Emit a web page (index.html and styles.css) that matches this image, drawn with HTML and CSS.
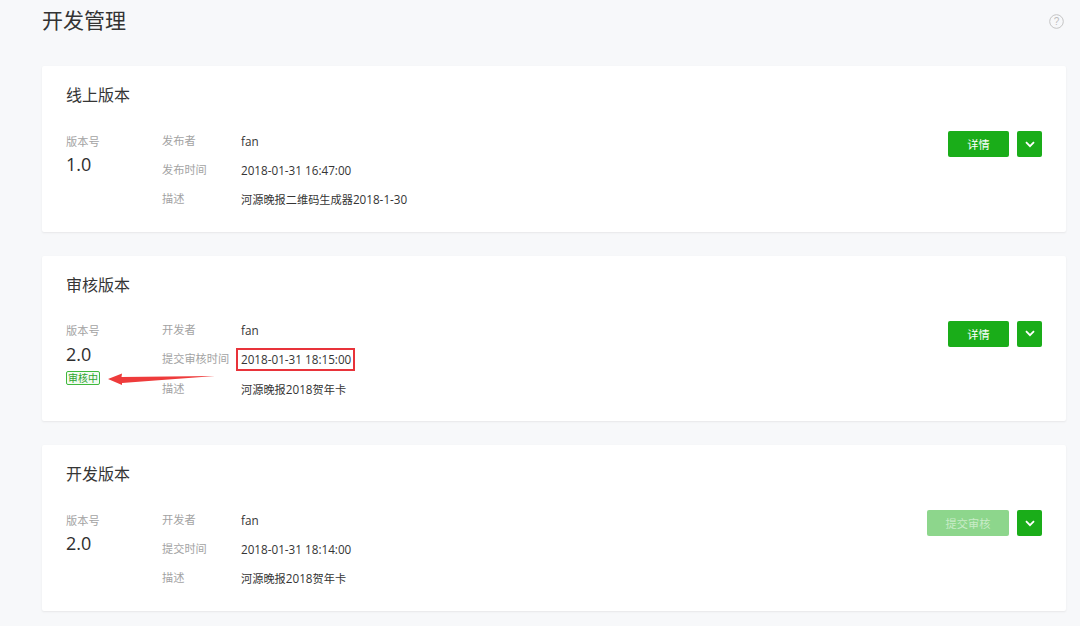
FILE: index.html
```html
<!DOCTYPE html>
<html lang="zh">
<head>
<meta charset="utf-8">
<title>开发管理</title>
<link rel="stylesheet" href="styles.css">
</head>
<body>
<main class="page">
  <header class="page-head">
    <h1 class="page-title">开发管理</h1>
    <svg class="help" width="15" height="15" viewBox="0 0 15 15"><circle cx="7.5" cy="7.5" r="6.8" fill="none" stroke="#c4c4c4" stroke-width="1"/><text x="7.5" y="11" text-anchor="middle" class="help-mark">?</text></svg>
  </header>

  <section class="card">
    <h2 class="card-title">线上版本</h2>
    <div class="card-body">
      <div class="version"><div class="version-label">版本号</div><div class="version-num">1.0</div></div>
      <dl class="meta">
        <div class="row"><dt>发布者</dt><dd>fan</dd></div>
        <div class="row"><dt>发布时间</dt><dd>2018-01-31 16:47:00</dd></div>
        <div class="row"><dt>描述</dt><dd><span class="zh">河源晚报二维码生成器</span>2018-1-30</dd></div>
      </dl>
      <div class="actions">
        <button class="btn">详情</button>
        <button class="btn-more"><svg width="10" height="7" viewBox="0 0 10 7"><path d="M1 1.2 5 5.2 9 1.2" fill="none" stroke="#fff" stroke-width="1.8"/></svg></button>
      </div>
    </div>
  </section>

  <section class="card">
    <h2 class="card-title">审核版本</h2>
    <div class="card-body">
      <div class="version">
        <div class="version-label">版本号</div>
        <div class="version-num">2.0</div>
        <span class="tag">审核中</span>
        <svg class="arrow" width="110" height="16" viewBox="0 0 110 16"><path d="M1 8 15 2.500 14.500 6 108 5 15 12 15 14Z" fill="#ee3b3b"/></svg>
      </div>
      <dl class="meta">
        <div class="row"><dt>开发者</dt><dd>fan</dd></div>
        <div class="row"><dt>提交审核时间</dt><dd class="marked">2018-01-31 18:15:00</dd></div>
        <div class="row"><dt>描述</dt><dd><span class="zh">河源晚报</span>2018<span class="zh">贺年卡</span></dd></div>
      </dl>
      <div class="actions">
        <button class="btn">详情</button>
        <button class="btn-more"><svg width="10" height="7" viewBox="0 0 10 7"><path d="M1 1.2 5 5.2 9 1.2" fill="none" stroke="#fff" stroke-width="1.8"/></svg></button>
      </div>
    </div>
  </section>

  <section class="card">
    <h2 class="card-title">开发版本</h2>
    <div class="card-body">
      <div class="version"><div class="version-label">版本号</div><div class="version-num">2.0</div></div>
      <dl class="meta">
        <div class="row"><dt>开发者</dt><dd>fan</dd></div>
        <div class="row"><dt>提交时间</dt><dd>2018-01-31 18:14:00</dd></div>
        <div class="row"><dt>描述</dt><dd><span class="zh">河源晚报</span>2018<span class="zh">贺年卡</span></dd></div>
      </dl>
      <div class="actions">
        <button class="btn btn-disabled">提交审核</button>
        <button class="btn-more"><svg width="10" height="7" viewBox="0 0 10 7"><path d="M1 1.2 5 5.2 9 1.2" fill="none" stroke="#fff" stroke-width="1.8"/></svg></button>
      </div>
    </div>
  </section>
</main>
</body>
</html>
```

FILE: styles.css
```css
* { box-sizing: border-box; }
html, body { margin: 0; height: 100%; overflow: hidden; }
body {
  background: #f7f8fa;
  color: #353535;
  font-family: "Open Sans", "Noto Sans CJK SC", sans-serif;
}
.page { padding: 0 14px 0 42px; display: flex; flex-direction: column; gap: 24px; }
.page-head { height: 42px; display: flex; align-items: center; justify-content: space-between; }
.page-title { margin: 0 0 2px; font-size: 21px; line-height: 42px; font-weight: 400; color: #333; }
.help { flex: none; margin-right: 2px; }
.help-mark { font-size: 10px; fill: #bdbdbd; font-family: "Liberation Sans", sans-serif; }
.card {
  background: #fff;
  height: 165.500px;
  border-radius: 2px;
  padding: 17px 24px 0;
  box-shadow: 0 1px 2px rgba(150, 150, 150, .16);
}
.card-title { margin: 0 0 23px; font-size: 16px; line-height: 24px; font-weight: 400; color: #353535; }
.card-body { display: flex; align-items: flex-start; }
.version { width: 96px; flex: none; position: relative; padding-top: 1.500px; }
.version-label { font-size: 11.200px; line-height: 20px; color: #a3a3a3; }
.version-num { font-size: 18px; line-height: 30px; margin-top: -2.500px; color: #2e2e2e; }
.tag {
  display: block;
  width: 34px;
  height: 14px;
  margin-top: 2px;
  border: 1px solid #3fb93e;
  border-radius: 2px;
  background: #f2fbf2;
  color: #2fa52e;
  font-size: 10px;
  line-height: 12px;
  text-align: center;
}
.arrow { position: absolute; left: 41px; top: 51px; }
.meta { margin: 0; padding-top: 0.500px; flex: 1; }
.row { display: flex; align-items: flex-start; height: 29.300px; }
.row dt { width: 79px; flex: none; font-size: 11.200px; line-height: 20px; color: #a3a3a3; white-space: nowrap; }
.row dd { margin: 0; font-size: 11.700px; line-height: 20px; color: #353535; position: relative; white-space: nowrap; }
.zh { font-size: 11.200px; }
.marked::after {
  content: "";
  position: absolute;
  inset: -1px -4px -2px -5px;
  border: 2px solid #e8333a;
}
.actions { flex: none; display: flex; gap: 8px; margin-top: 1px; }
.btn {
  width: 61px;
  height: 26px;
  padding: 0;
  border: 0;
  border-radius: 2px;
  background: #1aad19;
  color: #fff;
  font: 11.200px "Open Sans", "Noto Sans CJK SC", sans-serif;
}
.btn-disabled { width: 82px; background: #8dd68c; color: #c9ecc8; }
.btn-more {
  width: 25px;
  height: 26px;
  padding: 0;
  border: 0;
  border-radius: 2px;
  background: #1aad19;
  display: flex;
  align-items: center;
  justify-content: center;
}
```
